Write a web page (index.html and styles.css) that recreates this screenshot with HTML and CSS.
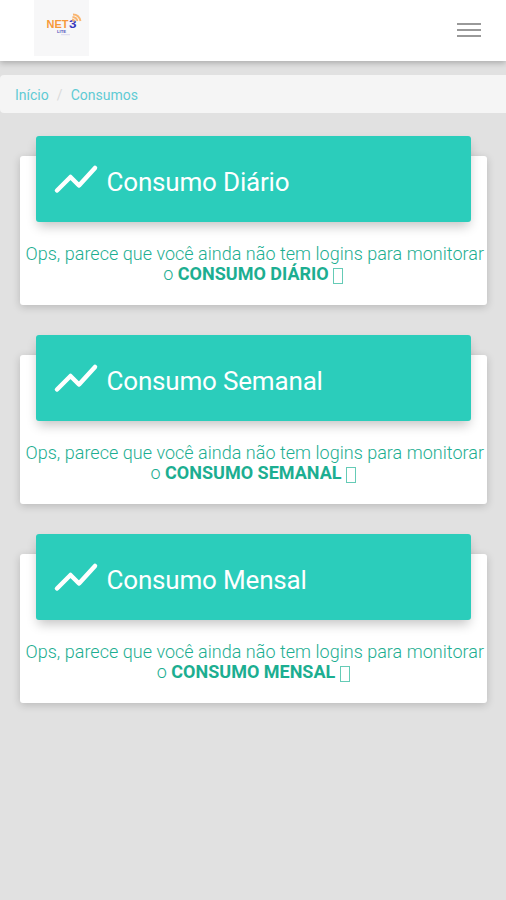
FILE: index.html
```html
<!DOCTYPE html>
<html lang="pt-BR">
<head>
<meta charset="utf-8">
<title>Consumos</title>
<link rel="stylesheet" href="styles.css">
</head>
<body>
<header class="navbar">
  <div class="logo">
    <svg width="55" height="56" viewBox="0 0 55 56" aria-label="NET3">
      <text class="logo-net" x="12.5" y="28" textLength="22" lengthAdjust="spacingAndGlyphs">NET</text>
      <text class="logo-three" x="35" y="28" textLength="7.500" lengthAdjust="spacingAndGlyphs">3</text>
      <text class="logo-sub" x="23" y="32.800" textLength="9" lengthAdjust="spacingAndGlyphs">LITE</text>
      <path d="M27 34.700h9" stroke="#dad9ef" stroke-width="1"/>
      <path d="M39 14.500q6 0 7.500 6.500M38.500 17q4 .3 5 4M38 19.500q2 .2 2.500 2" fill="none" stroke="#f9b570" stroke-width="1.800"/>
    </svg>
  </div>
  <div class="menu"><span></span><span></span><span></span></div>
</header>
<nav class="breadcrumb"><a>Início</a><span class="slash">/</span><a>Consumos</a></nav>
<main class="cards">
  <section class="card">
    <div class="card-header">
      <svg class="trend" viewBox="0 0 42 28"><path d="M2 25.500 15.500 12 24 20.500 40 3"/></svg>
      <h4>Consumo Diário</h4>
    </div>
    <p><span class="line">Ops, parece que você ainda não tem logins para monitorar</span><br>o <b>CONSUMO DIÁRIO</b> <i class="tofu"></i></p>
  </section>
  <section class="card">
    <div class="card-header">
      <svg class="trend" viewBox="0 0 42 28"><path d="M2 25.500 15.500 12 24 20.500 40 3"/></svg>
      <h4>Consumo Semanal</h4>
    </div>
    <p><span class="line">Ops, parece que você ainda não tem logins para monitorar</span><br>o <b>CONSUMO SEMANAL</b> <i class="tofu"></i></p>
  </section>
  <section class="card">
    <div class="card-header">
      <svg class="trend" viewBox="0 0 42 28"><path d="M2 25.500 15.500 12 24 20.500 40 3"/></svg>
      <h4>Consumo Mensal</h4>
    </div>
    <p><span class="line">Ops, parece que você ainda não tem logins para monitorar</span><br>o <b>CONSUMO MENSAL</b> <i class="tofu"></i></p>
  </section>
</main>
</body>
</html>
```
FILE: styles.css
```css
* { box-sizing: border-box; }
body {
  margin: 0;
  min-height: 900px;
  background: #e1e1e1;
  font-family: Roboto, "Liberation Sans", sans-serif;
  font-weight: 300;
}
.navbar {
  display: flex;
  justify-content: space-between;
  height: 61px;
  padding: 0 25px 0 34px;
  background: #fff;
  box-shadow: 0 2px 6px rgba(0, 0, 0, .25);
}
.logo { width: 55px; height: 56px; background: #f7f7f8; }
.logo svg { display: block; }
.logo-net, .logo-three { font: 700 10px "Liberation Sans", sans-serif; fill: #f79a3a; }
.logo-three { fill: #3636bd; }
.logo-sub { font: 700 4px "Liberation Sans", sans-serif; fill: #5656be; }
.menu {
  display: flex;
  flex-direction: column;
  gap: 4px;
  width: 24px;
  padding-top: 23px;
}
.menu span { height: 2px; background: #999; }
.breadcrumb {
  display: flex;
  align-items: center;
  height: 38px;
  margin-top: 14px;
  padding: 1px 0 0 15px;
  border-radius: 4px 0 0 4px;
  background: #f5f5f5;
  color: #5fcbd4;
  font-size: 14px;
  font-weight: 400;
}
.slash { width: 22px; text-align: center; color: #dadada; }
.cards {
  display: grid;
  gap: 50px;
  padding: 43px 19px 0 20px;
}
.card {
  height: 149px;
  padding: 0 16px 0 15.5px;
  border-radius: 3px;
  background: #fff;
  box-shadow: 0 2px 9px rgba(0, 0, 0, .18);
}
.card-header {
  display: flex;
  align-items: center;
  height: 86px;
  margin-top: -20px;
  padding-left: 19px;
  border-radius: 3px;
  background: #2bcdbb;
  box-shadow: 0 6px 12px -2px rgba(0, 0, 0, .24);
  color: #fff;
}
.trend { width: 42px; height: 28px; margin: 0 10px 0 0; overflow: visible; }
.trend path { fill: none; stroke: #fff; stroke-width: 4.5; stroke-linejoin: round; stroke-linecap: round; }
h4 { margin: 5px 0 0; font-size: 26px; font-weight: 400; line-height: 32px; letter-spacing: -.18px; }
p {
  margin: 22px -16px 0;
  color: #1cae91;
  font-size: 18px;
  line-height: 20px;
  text-align: center;
  white-space: nowrap;
}
.line { padding-left: 3px; letter-spacing: .02px; }
b { font-weight: 700; }
.tofu {
  display: inline-block;
  width: 10px;
  height: 16px;
  border: 1px solid #65cbb6;
  vertical-align: -4px;
}
```
